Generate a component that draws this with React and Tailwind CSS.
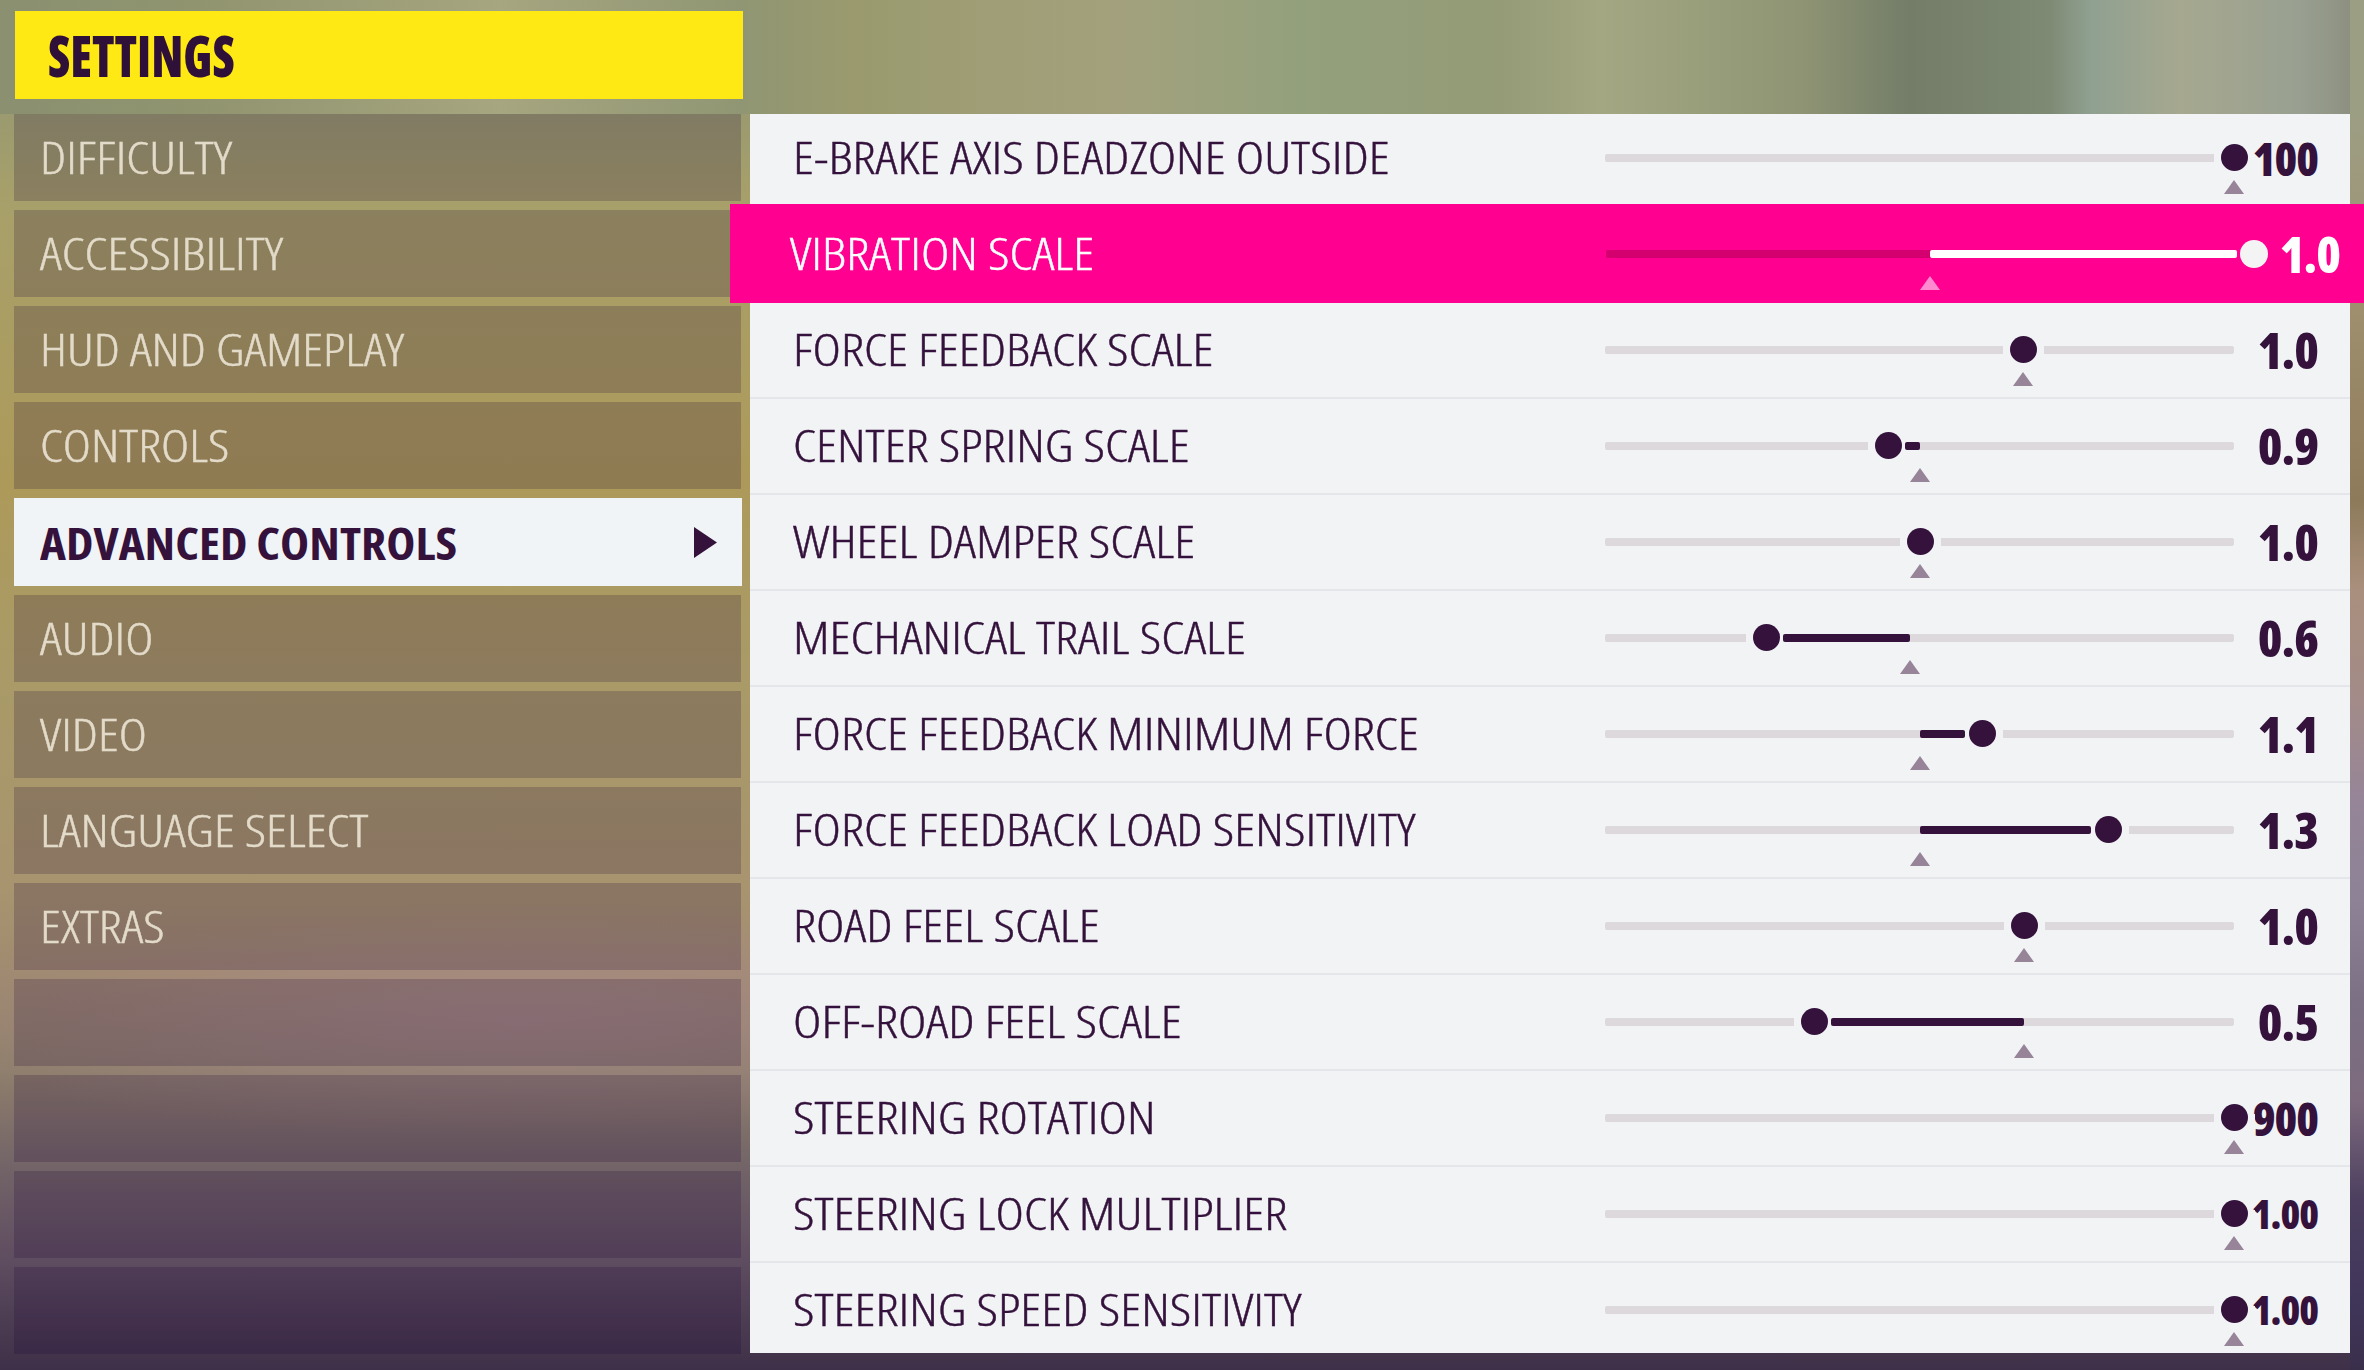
const menu = ["DIFFICULTY", "ACCESSIBILITY", "HUD AND GAMEPLAY", "CONTROLS", "ADVANCED CONTROLS", "AUDIO", "VIDEO", "LANGUAGE SELECT", "EXTRAS", "", "", "", ""];

// knob and mark are px offsets along the 629px track
const settings = [
  { label: "E-BRAKE AXIS DEADZONE OUTSIDE", value: "100", knob: 629, mark: 629 },
  { label: "VIBRATION SCALE", value: "1.0", knob: 648, mark: 324, active: true },
  { label: "FORCE FEEDBACK SCALE", value: "1.0", knob: 418, mark: 418 },
  { label: "CENTER SPRING SCALE", value: "0.9", knob: 283, mark: 315 },
  { label: "WHEEL DAMPER SCALE", value: "1.0", knob: 315, mark: 315 },
  { label: "MECHANICAL TRAIL SCALE", value: "0.6", knob: 161, mark: 305 },
  { label: "FORCE FEEDBACK MINIMUM FORCE", value: "1.1", knob: 377, mark: 315 },
  { label: "FORCE FEEDBACK LOAD SENSITIVITY", value: "1.3", knob: 503, mark: 315 },
  { label: "ROAD FEEL SCALE", value: "1.0", knob: 419, mark: 419 },
  { label: "OFF-ROAD FEEL SCALE", value: "0.5", knob: 209, mark: 419 },
  { label: "STEERING ROTATION", value: "900", knob: 629, mark: 629 },
  { label: "STEERING LOCK MULTIPLIER", value: "1.00", knob: 629, mark: 629 },
  { label: "STEERING SPEED SENSITIVITY", value: "1.00", knob: 629, mark: 629 },
];

const pageBackground =
  "[background:linear-gradient(90deg,#8a9070_0,#90946f_200px,#a6a680_500px,#909673_743px,#9a9a6e_850px,#a3a17d_1120px,#93a07c_1300px,#949b76_1500px,#a3a782_1600px,#8f9474_1800px,#737d68_1910px,#7f8a74_2050px,#8fa091_2090px,#a6a88f_2180px,#99a091_2300px,#8a8c7c_2364px)_0_0/100%_114px_no-repeat,radial-gradient(ellipse_620px_120px_at_520px_1020px,rgba(180,140,165,0.38),transparent),linear-gradient(180deg,#96996f_0,#9a9a70_110px,#a8a06a_205px,#ad9a5a_480px,#a99a68_685px,#a8946f_890px,#a08a70_973px,#8f7f6c_1070px,#736468_1166px,#5e4c60_1262px,#3e3048_1370px)]";

const rightEdge =
  "bg-[linear-gradient(180deg,#9c9e84_114px,#a09070_300px,#8d7a5a_500px,#a98f7d_590px,#a28b88_700px,#968598_800px,#8d8296_900px,#7b7084_1000px,#7d6a7d_1100px,#4c3f5f_1200px,#40365a_1300px,#3a2f4b_1370px)]";

function Slider({ knob, mark, active }) {
  const fillLeft = knob < mark ? knob + 17 : mark;
  const fillRight = knob < mark ? mark : knob - 17;
  const hasFill = fillRight > fillLeft;

  return (
    <div className={`relative shrink-0 h-[96px] ${active ? "w-[648px]" : "w-[629px]"}`}>
      <div className={`absolute left-0 right-0 top-[44px] h-2 rounded-[2px] ${active ? "bg-[#d4006f]" : "bg-[#dcd8dc]"}`} />
      <div
        className={`absolute top-[44px] h-2 w-[41px] ${active ? "bg-[#ff0090]" : "bg-[#f1f3f5]"}`}
        style={{ left: knob - 20.5 }}
      />
      {hasFill && (
        <div
          className={`absolute top-[44px] h-2 rounded-[2px] ${active ? "bg-white" : "bg-[#34123c]"}`}
          style={{ left: fillLeft, width: fillRight - fillLeft }}
        />
      )}
      <div
        className={`absolute top-[34px] rounded-full ${active ? "h-[28px] w-[28px] bg-[#f4f4f4]" : "h-[27px] w-[27px] bg-[#34123c]"}`}
        style={{ left: knob - (active ? 14 : 13.5) }}
      />
      <svg
        viewBox="0 0 20 14"
        className={`absolute top-[70px] h-[14px] w-5 ${active ? "fill-[#ff8ad0]" : "fill-[#988499]"}`}
        style={{ left: mark - 10 }}
      >
        <path d="M10 0 L20 14 L0 14 Z" />
      </svg>
    </div>
  );
}

function valueSize(value) {
  if (value.length === 4) return "text-[40px]";
  if (value.includes(".")) return "text-[50px]";
  return "text-[46px]";
}

function SettingRow({ label, value, knob, mark, active }) {
  return (
    <div
      className={
        active
          ? "relative z-10 flex h-[99px] items-center -mt-[2px] -mb-px -ml-5 -mr-[14px] pt-px bg-[#ff0090] text-white"
          : "flex h-[96px] items-center text-[#34123c] shadow-[inset_0_-1px_0_#e5e6e9,0_1px_0_#e5e6e9] last:shadow-none"
      }
    >
      <div className={`shrink-0 pb-[3px] text-[45px] font-light leading-none ${active ? "w-[876px] pl-[60px]" : "w-[855px] pl-[43px]"}`}>
        <span className="block origin-left scale-x-[1.2] whitespace-nowrap [-webkit-text-stroke:0.4px_currentColor]">{label}</span>
      </div>
      <Slider knob={knob} mark={mark} active={active} />
      <div className={`flex-1 text-right font-extrabold leading-none tracking-[-1px] ${valueSize(value)} ${active ? "pr-6" : "pr-8"}`}>
        {value}
      </div>
    </div>
  );
}

export default function App() {
  return (
    <div className={`flex h-[1370px] w-[2364px] overflow-hidden font-['Open_Sans',sans-serif] font-stretch-condensed ${pageBackground}`}>
      <div className="w-[750px] shrink-0 pl-[14px] pt-[11px]">
        <div className="ml-px flex h-[88px] w-[728px] items-center bg-[#ffe914] pl-[33px] text-[57px] font-extrabold leading-none text-[#2f1038]">
          <span className="origin-left scale-x-[0.86]">SETTINGS</span>
        </div>
        <div className="mt-[15px] flex flex-col gap-[9px]">
          {menu.map((item, i) =>
            item === "ADVANCED CONTROLS" ? (
              <div key={i} className="flex h-[88px] w-[728px] items-center justify-between bg-[#f1f4f6] pl-[26px] pr-[25px] text-[45px] font-bold leading-none text-[#34123c]">
                <span className="origin-left scale-x-[1.094]">{item}</span>
                <svg viewBox="0 0 23 31" className="h-[31px] w-[23px] fill-[#34123c]">
                  <path d="M0 0 L23 15.5 L0 31 Z" />
                </svg>
              </div>
            ) : (
              <div key={i} className="flex h-[87px] w-[727px] items-center bg-[#1a0030]/20 pb-[2px] pl-[26px] text-[45px] font-light leading-none text-[#e3dbc9]">
                <span className="origin-left scale-x-[1.19] [-webkit-text-stroke:0.4px_currentColor]">{item}</span>
              </div>
            )
          )}
        </div>
      </div>

      <div className="flex-1 pt-[114px]">
        <div className="flex h-[1239px] flex-col bg-[#f1f3f5]">
          <div className="-mt-1">
            {settings.map((s) => (
              <SettingRow key={s.label} {...s} />
            ))}
          </div>
        </div>
      </div>

      <div className={`w-[14px] shrink-0 ${rightEdge}`} />
    </div>
  );
}
